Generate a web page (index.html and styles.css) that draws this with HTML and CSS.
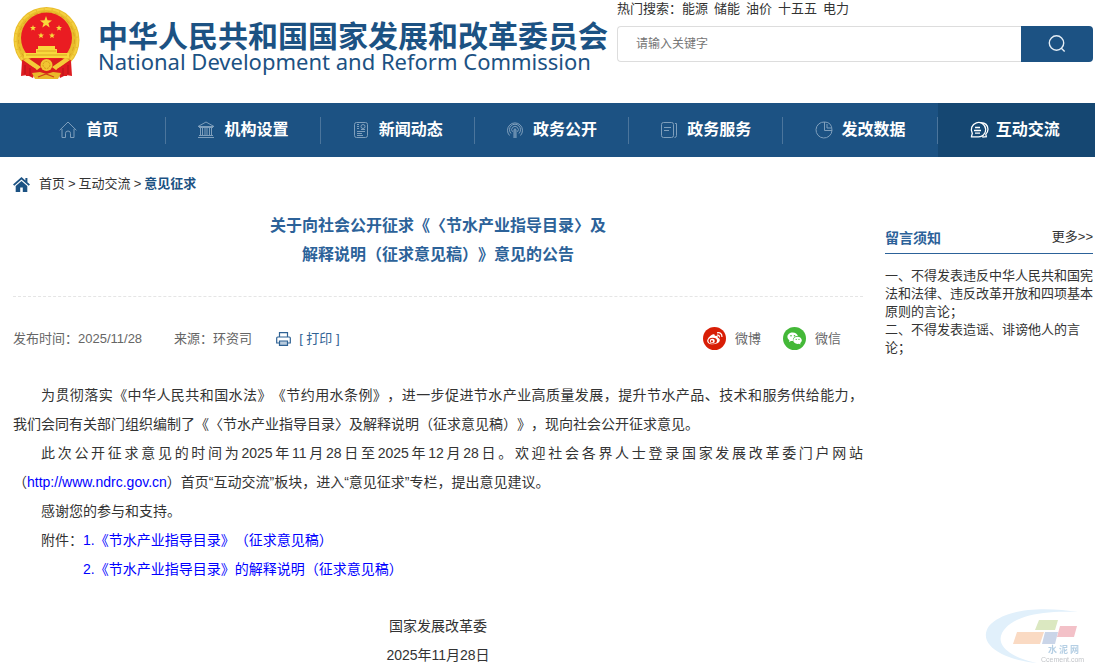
FILE: index.html
```html
<!DOCTYPE html>
<html lang="zh-CN">
<head>
<meta charset="utf-8">
<meta name="viewport" content="width=device-width, initial-scale=1">
<title>意见征求 - 中华人民共和国国家发展和改革委员会</title>
<link rel="stylesheet" href="styles.css">
</head>
<body>
<header class="header">
  <a class="brand" href="#">
    <svg class="emblem" viewBox="0 0 67 73" aria-hidden="true">
      <circle cx="33.500" cy="33" r="33" fill="#e9bd2c"/>
      <circle cx="33.500" cy="33" r="31" fill="none" stroke="#f4d03f" stroke-width="2" stroke-dasharray="7 1"/>
      <circle cx="33.500" cy="33" r="28" fill="none" stroke="#dca622" stroke-width="1" stroke-dasharray="4 3"/>
      <circle cx="33.500" cy="31" r="25.500" fill="#ea1c22"/>
      <g fill="#f8d93c">
        <path d="M33 9l1.500 4.300 4.500.1-3.600 2.800 1.300 4.400-3.700-2.600-3.700 2.600 1.300-4.400-3.600-2.800 4.500-.1z"/>
        <path d="M20 18l.8 2 2.200.1-1.700 1.400.6 2.100-1.900-1.200-1.900 1.200.6-2.100-1.700-1.400 2.200-.1zM46 18l.8 2 2.200.1-1.700 1.400.6 2.100-1.900-1.200-1.900 1.200.6-2.100-1.700-1.400 2.200-.1zM28 25.500l.8 2 2.200.1-1.700 1.400.6 2.100-1.900-1.200-1.900 1.200.6-2.100-1.700-1.400 2.200-.1zM39 25.500l.8 2 2.200.1-1.700 1.400.6 2.100-1.900-1.200-1.900 1.200.6-2.100-1.700-1.400 2.200-.1z"/>
        <path d="M25 39h17v3h2v4h12v5H11v-5h12v-4h2z"/>
      </g>
      <path d="M24 44h19M13 48h41" stroke="#dca622" fill="none"/>
      <path d="M9 53l10-2 14.500 3L48 51l10 2-4 16H13z" fill="#d91d1c"/>
      <path d="M10 53l5-2 13 9-4 3zM57 53l-5-2-13 9 4 3z" fill="#f4cb38"/>
      <circle cx="33.500" cy="58" r="6" fill="#f2c532"/>
      <circle cx="33.500" cy="58" r="3.500" fill="none" stroke="#d4981b" stroke-dasharray="2 1"/>
      <path d="M9 54l-1 15 6-1 6 3 3-9zM58 54l1 15-6-1-6 3-3-9z" fill="#dd1b20"/>
      <path d="M12 58v9M17 61v8M55 58v9M50 61v8" stroke="#b51519" fill="none"/>
      <path d="M19 66l8-1 6.500 2 6.500-2 8 1-3 6H22z" fill="#e9b92a"/>
      <path d="M25 70l8-3 8 3" stroke="#d2401b" stroke-width="1.200" fill="none"/>
    </svg>
    <span class="brand-text">
      <span class="brand-cn">中华人民共和国国家发展和改革委员会</span>
      <span class="brand-en" lang="en">National Development and Reform Commission</span>
    </span>
  </a>
  <div class="search-area">
    <div class="hot"><span>热门搜索：<a href="#">能源</a></span><a href="#">储能</a><a href="#">油价</a><a href="#">十五五</a><a href="#">电力</a></div>
    <form class="search">
      <input type="text" placeholder="请输入关键字" aria-label="搜索关键字">
      <button type="button" aria-label="搜索">
        <svg width="18" height="18" viewBox="0 0 18 18" fill="none" stroke="#e4edf5" stroke-width="1.400"><circle cx="8.500" cy="8" r="7.200"/><path d="M13.300 13.200l3.400 3.300"/></svg>
      </button>
    </form>
  </div>
</header>

<nav class="nav" aria-label="主导航">
  <a href="#"><svg width="18" height="18" viewBox="0 0 18 18"><path d="M.6 9.300L9 1l8.400 8.300M3 8v8.500h3.500v-4.200q0-2.300 2.500-2.300t2.500 2.300v4.200H15V8"/></svg>首页</a>
  <a href="#"><svg width="18" height="18" viewBox="0 0 18 18"><path d="M1 5.500L9 1l8 4.500zM1 16.500h16M2 14.500h14M3.500 7v7M5.500 7v7M8 7v7M10 7v7M12.500 7v7M14.500 7v7M2 6.500h14"/></svg>机构设置</a>
  <a href="#"><svg width="18" height="18" viewBox="0 0 18 18"><rect x="2.500" y="1.500" width="13" height="15" rx="2"/><circle cx="11" cy="5.500" r="2"/><path d="M5 3.500h2M5 5.500h2M5 7.500h2M9 8.500h4M5 10.500h8M5 12.500h5M5 14.500h6"/></svg>新闻动态</a>
  <a href="#"><svg width="18" height="18" viewBox="0 0 18 18"><path d="M3.500 14.500a7.500 7.500 0 1 1 11 0M5 12.500a5.500 5.500 0 1 1 8 0M6.500 10.800a3.300 3.300 0 1 1 5 0M8 17V8.500q1-1.500 2 0V17M9 8v9"/></svg>政务公开</a>
  <a href="#"><svg width="18" height="18" viewBox="0 0 18 18"><rect x="1.500" y="1.500" width="12" height="15" rx="2"/><path d="M4 6.500h7M4 9.500h5M15 2.500h1.500v12q0 2-2 2"/></svg>政务服务</a>
  <a href="#"><svg width="18" height="18" viewBox="0 0 18 18"><path d="M9.500 1A8 8 0 1 0 17 9.500M9.500 1v8.500H17Q17 1 9.500 1zM12 3v4h4"/></svg>发改数据</a>
  <a href="#" class="active" aria-current="page"><svg width="20" height="18" viewBox="0 0 20 18"><path d="M2.500 15.500l.8-3.200A7.200 7.200 0 1 1 8.500 15.800H2.500zM11 1.800q7.500-.5 8 6.400-.2 3.300-2.200 5l.5 2.500-4 .3M6 6.500h5M5 9.500h7M6 12.200h5"/></svg>互动交流</a>
</nav>

<div class="crumbs">
  <svg width="17" height="15" viewBox="0 0 17 15" aria-hidden="true"><path fill="#1c5283" d="M8.500 0L0 7.600l1.300 1.100L8.500 2.400l7.200 6.300L17 7.600l-2.600-2.300V1h-2v2.500zM2.700 9v6h4.500v-4.500h2.600V15h4.500V9L8.500 3.900z"/></svg>
  <div class="trail"><a href="#">首页</a><span>&gt;</span><a href="#">互动交流</a><span>&gt;</span><a class="here" href="#">意见征求</a></div>
</div>

<div class="layout">
  <main class="article">
    <h1>关于向社会公开征求《〈节水产业指导目录〉及<br>解释说明（征求意见稿）》意见的公告</h1>
    <div class="meta">
      <span>发布时间：2025/11/28</span>
      <span class="source">来源：环资司</span>
      <a class="print" href="#"><svg width="15" height="14" viewBox="0 0 15 14" fill="none" stroke="#2f6294" stroke-width="1.200"><path d="M3.500 5V.7h8V5M3 11H.7V6q0-1 1-1h11.600q1 0 1 1v5H12"/><path d="M3.500 9h8v4.300h-8z" fill="#b9cbdc"/></svg><span>[ 打印 ]</span></a>
      <span class="share">
        <a href="#"><svg width="23" height="23" viewBox="0 0 23 23"><circle cx="11.500" cy="11.500" r="11.500" fill="#d81e06"/><path fill="#fff" d="M9.500 7.500c1.800-.8 2.700 0 2.300 1.500 2.200-.8 3.600 0 2.900 1.700 3.300.9 2.500 4.100-.4 5.500-3.500 1.900-9 1.300-10-1.500-.7-2.500 2.600-6 5.200-7.200z"/><ellipse cx="9.700" cy="13.700" rx="4.300" ry="3" fill="#d81e06"/><ellipse cx="9.300" cy="13.900" rx="2.500" ry="2.200" fill="#fff"/><circle cx="8.900" cy="14.300" r="1.100" fill="#d81e06"/><path d="M14 8.200q2.600-.5 2.400 2.200M14 5.800q5-.7 5 4.200" fill="none" stroke="#fff" stroke-width="1.200"/></svg>微博</a>
        <a href="#"><svg width="23" height="23" viewBox="0 0 23 23"><circle cx="11.500" cy="11.500" r="11.500" fill="#44b838"/><path fill="#fff" d="M9.700 5.500c-3 0-5.300 1.900-5.300 4.300 0 1.400.8 2.600 2 3.400L6 15l2-1.100 2 .2c-.6-3 1.800-5 4.900-5-.4-2-2.600-3.600-5.200-3.600z"/><path fill="#fff" d="M14.500 9.700c-2.400 0-4.300 1.600-4.300 3.600s1.900 3.600 4.300 3.600l1.500-.2 1.500.9-.3-1.500c1-.7 1.600-1.700 1.600-2.800 0-2-1.900-3.600-4.300-3.600z"/><g fill="#44b838"><circle cx="8" cy="8.700" r=".8"/><circle cx="11.500" cy="8.700" r=".8"/><circle cx="13.200" cy="12.400" r=".6"/><circle cx="16" cy="12.400" r=".6"/></g></svg>微信</a>
      </span>
    </div>
    <div class="content">
      <p><span class="full indent">为贯彻落实《中华人民共和国水法》《节约用水条例》，进一步促进节水产业高质量发展，提升节水产品、技术和服务供给能力，</span>我们会同有关部门组织编制了《〈节水产业指导目录〉及解释说明（征求意见稿）》，现向社会公开征求意见。</p>
      <p><span class="full indent">此次公开征求意见的时间为2025年11月28日至2025年12月28日。欢迎社会各界人士登录国家发展改革委门户网站</span>（<a href="#">http://www.ndrc.gov.cn</a>）首页“互动交流”板块，进入“意见征求”专栏，提出意见建议。</p>
      <p class="indent">感谢您的参与和支持。</p>
      <p class="indent">附件：<a href="#">1.《节水产业指导目录》（征求意见稿）</a></p>
      <p class="second"><a href="#">2.《节水产业指导目录》的解释说明（征求意见稿）</a></p>
      <p class="sign">国家发展改革委<br>2025年11月28日</p>
    </div>
  </main>
  <aside class="notice">
    <div class="notice-head"><h2>留言须知</h2><a href="#">更多&gt;&gt;</a></div>
    <p>一、不得发表违反中华人民共和国宪法和法律、违反改革开放和四项基本原则的言论；<br>二、不得发表造谣、诽谤他人的言论；</p>
  </aside>
</div>

<svg class="watermark" width="106" height="58" viewBox="0 0 106 58" aria-hidden="true">
  <path fill="#e1f0fb" d="M94 4C64-1 22-1 5 18c-13 19 16 34 48 37C25 49 12 37 18 25 27 8 58 2 94 4z"/>
  <path fill="#dbe8c1" d="M55 12h19l-3 10H51z"/><path fill="#f3c1c8" d="M76 18h17l-3 11H73z"/><path fill="#fadac3" d="M33 24h27l-4 12H29z"/><path fill="#cad5e8" d="M61 24h13l-3 12H58z"/>
  <text x="64" y="45" class="wm-cn">水 泥 网</text><text x="57" y="54" class="wm-en">Ccement.com</text>
</svg>
</body>
</html>
```
FILE: styles.css
```css
* { box-sizing: border-box; }
body {
  margin: 0;
  background: #fff;
  color: #333;
  font: 13px/18px "Liberation Sans", "Noto Sans CJK SC", sans-serif;
  text-spacing-trim: space-all;
}
a { color: inherit; text-decoration: none; }
p, h1, h2 { margin: 0; }
svg { flex: none; }

.header {
  display: flex;
  justify-content: space-between;
  align-items: flex-start;
  height: 103px;
  padding: 0 2px 0 13px;
}
.brand { display: flex; gap: 18px; padding-top: 7px; color: #1c5283; }
.emblem { width: 67px; height: 73px; }
.brand-text { display: flex; flex-direction: column; padding-top: 12px; white-space: nowrap; }
.brand-cn { font: bold 30px/30px "Noto Sans CJK SC", sans-serif; }
.brand-en { font: 22px/24px "Noto Sans", sans-serif; }
.search-area { width: 476px; }
.hot { display: flex; gap: 6px; }
.search { display: flex; height: 36px; margin-top: 8px; }
.search input {
  flex: 1;
  min-width: 0;
  padding: 0 18px;
  border: 1px solid #ddd;
  border-right: 0;
  border-radius: 4px 0 0 4px;
  font: 12px "Liberation Sans", "Noto Sans CJK SC", sans-serif;
}
.search input::placeholder { color: #757575; }
.search button {
  display: flex;
  align-items: center;
  justify-content: center;
  width: 72px;
  padding: 0;
  border: 0;
  border-radius: 0 4px 4px 0;
  background: #1c5283;
}

.nav { display: flex; height: 54px; padding-left: 12px; background: #1c5283; }
.nav a {
  display: flex;
  flex: 1;
  align-items: center;
  justify-content: center;
  gap: 9px;
  padding-right: 1px;
  color: #fff;
  font-size: 16px;
  font-weight: bold;
  white-space: nowrap;
  background: linear-gradient(#4b759c, #4b759c) right center / 1px 27px no-repeat;
}
.nav svg { fill: none; stroke: #7f9fbc; stroke-width: 1; }
.nav .active { gap: 7px; padding-right: 4px; background: #154772; }
.nav .active svg { stroke: #fff; stroke-width: 1.3; }

.crumbs { display: flex; align-items: center; gap: 9px; padding: 18px 13px 0; }
.trail { display: flex; gap: 3px; }
.crumbs .here { color: #1c5283; font-weight: bold; }

.layout {
  display: grid;
  grid-template-columns: minmax(0, 1fr) 208px;
  gap: 22px;
  padding: 18px 2px 0 13px;
}
.article h1 {
  padding-bottom: 27px;
  border-bottom: 1px dashed #e5e5e5;
  color: #2c6299;
  font-size: 16px;
  line-height: 29px;
  text-align: center;
}
.meta { display: flex; align-items: center; padding-top: 30px; color: #666; }
.source { margin-left: 32px; }
.print { display: flex; align-items: center; gap: 8px; margin-left: 24px; color: #2f6294; }
.share { display: flex; gap: 22px; margin-left: auto; margin-right: 22px; }
.share a { display: flex; align-items: center; gap: 9px; }

.content { padding-top: 31px; font-size: 14px; line-height: 29px; }
.content a { color: #00f; }
.indent { text-indent: 2em; }
.full { display: block; text-align-last: justify; }
.second { padding-left: 5em; }
.sign { padding-top: 28px; text-align: center; }

.notice { padding-top: 17px; }
.notice-head {
  display: flex;
  justify-content: space-between;
  padding-bottom: 5px;
  border-bottom: 1px solid #2c6299;
}
.notice h2 { color: #2c6299; font-size: 14px; line-height: 20px; }
.notice p { padding-top: 13px; }

.watermark { position: fixed; right: 5px; bottom: 5px; }
.wm-cn { fill: #b5cfe4; font: bold 9px "Noto Sans CJK SC", sans-serif; }
.wm-en { fill: #c2c5c9; font: 7px "Liberation Sans", sans-serif; }
```
